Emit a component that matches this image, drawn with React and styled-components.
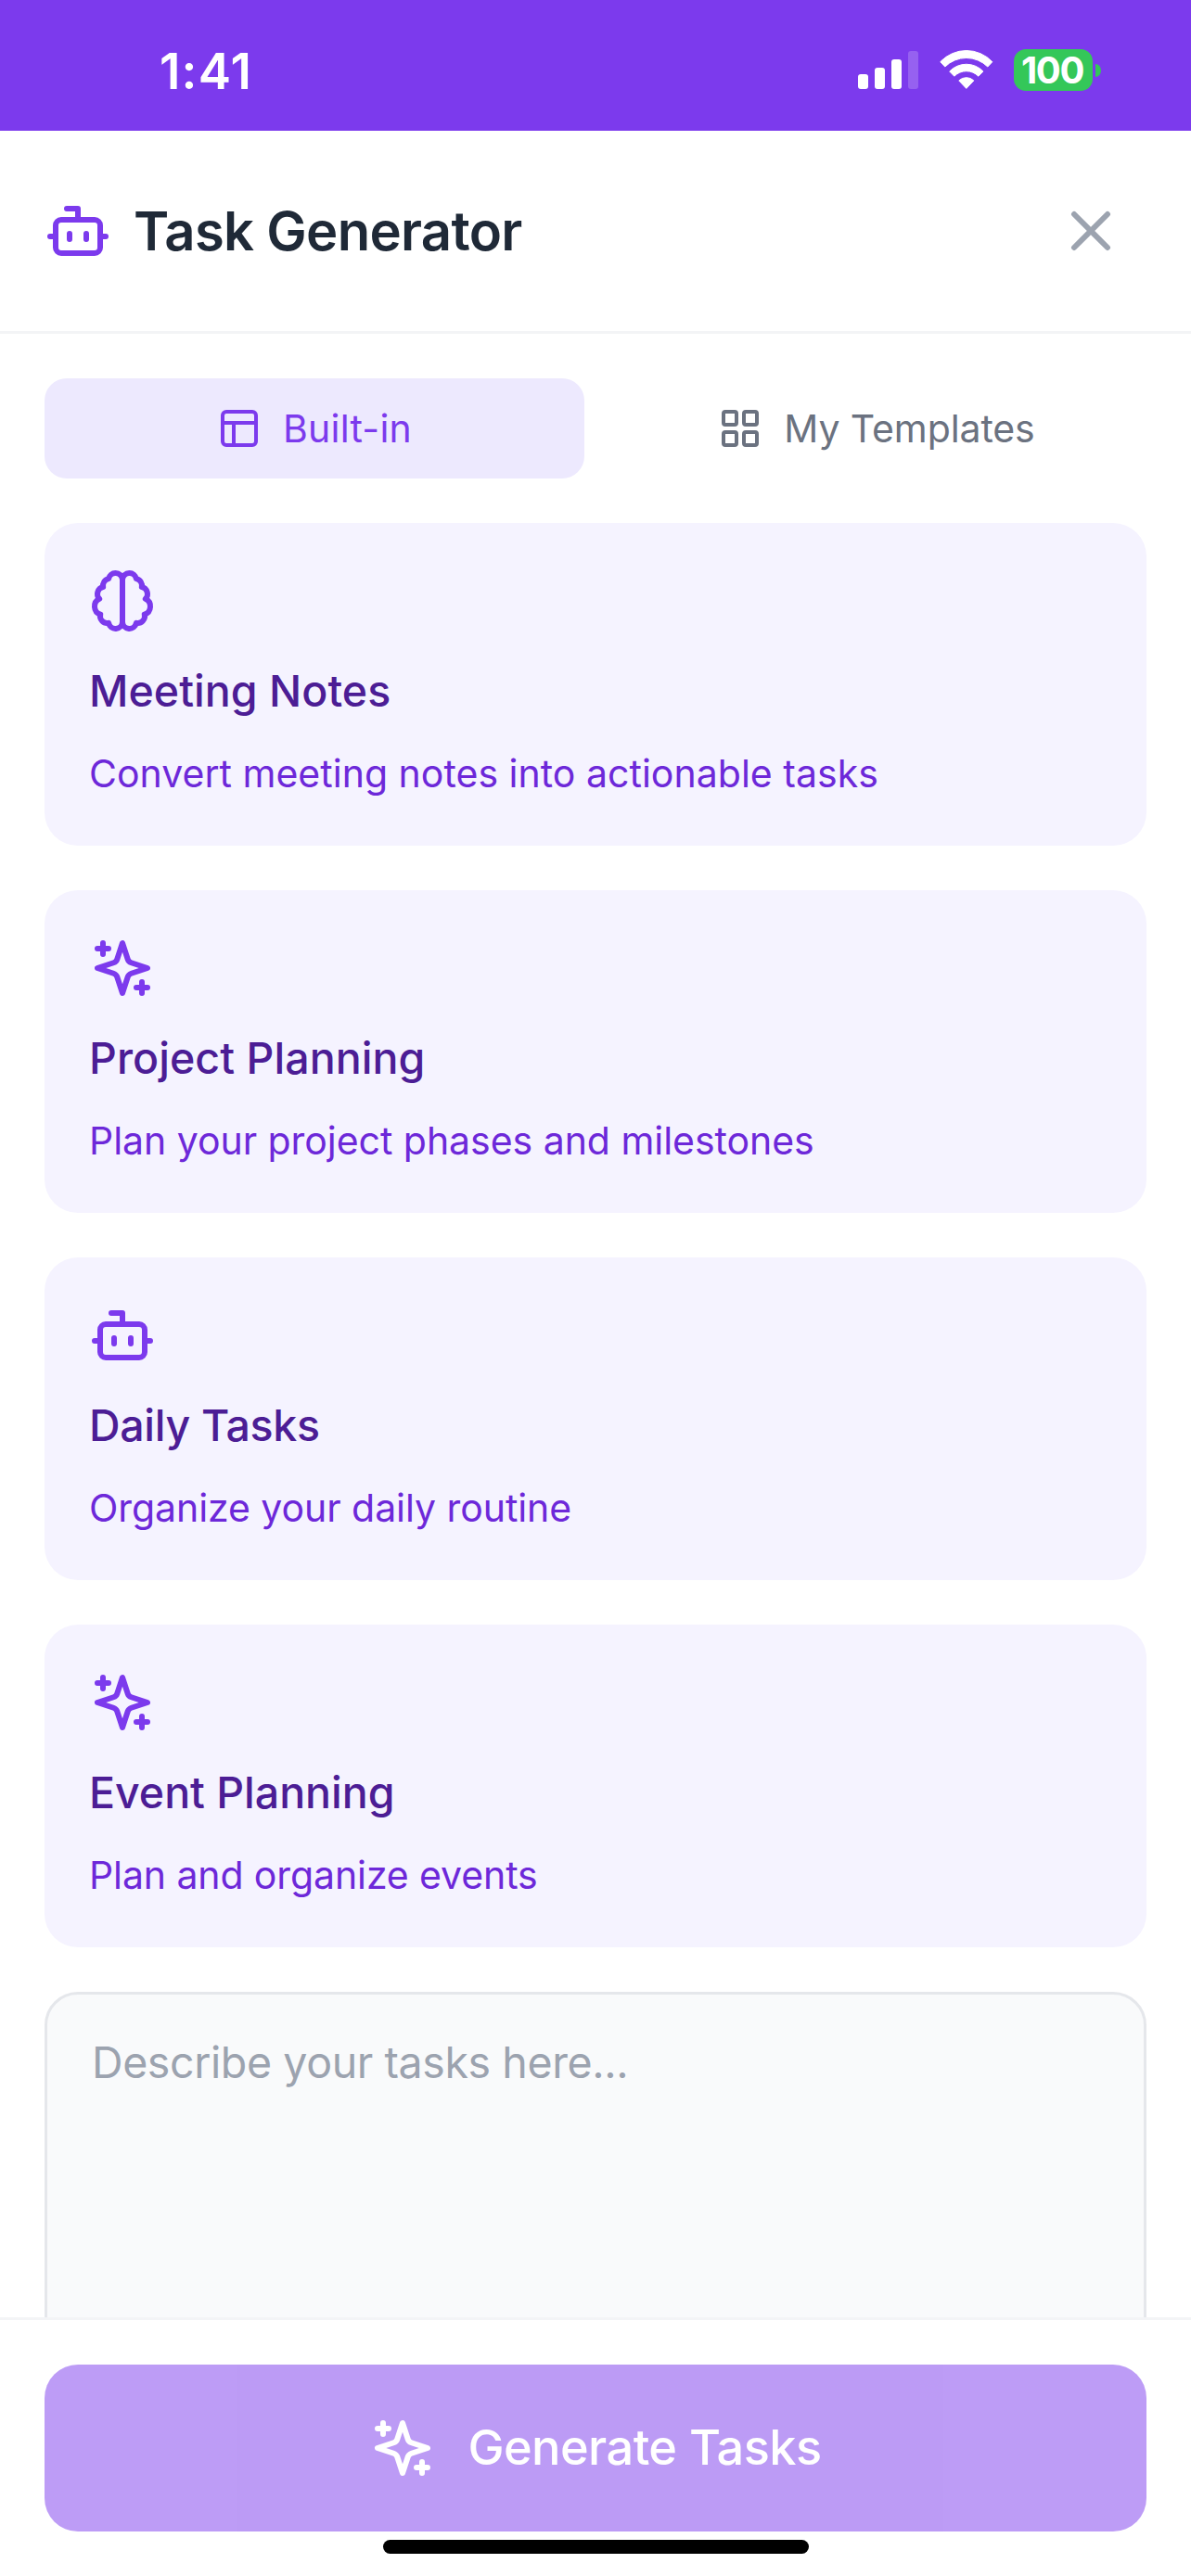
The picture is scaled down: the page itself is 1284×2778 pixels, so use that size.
import React from "react";
import styled, { createGlobalStyle } from "styled-components";

const GlobalStyle = createGlobalStyle`
  * { box-sizing: border-box; }
  body {
    margin: 0;
    background: #ffffff;
    font-family: Inter, "Liberation Sans", sans-serif;
  }
`;

const Screen = styled.div`
  display: flex;
  flex-direction: column;
  width: 1284px;
  height: 2778px;
  overflow: hidden;
  background: #ffffff;
`;

const StatusBar = styled.div`
  flex: none;
  display: flex;
  justify-content: space-between;
  align-items: flex-start;
  height: 141px;
  padding: 53px 97px 0 172px;
  background: #7c3aed;
  color: #ffffff;
`;

const Time = styled.span`
  font-size: 53px;
  font-weight: 600;
  line-height: 49px;
  letter-spacing: 1.2px;
`;

const StatusIcons = styled.div`
  display: flex;
  align-items: flex-start;
`;

const SignalBars = styled.div`
  display: flex;
  align-items: flex-end;
  gap: 7px;
  height: 43px;
  margin-right: 23px;
`;

const SignalBar = styled.span`
  width: 11px;
  height: ${(p) => p.$height}px;
  border-radius: 3px;
  background: #ffffff;
  opacity: ${(p) => (p.$dim ? 0.2 : 1)};
`;

const WifiIcon = styled.svg`
  width: 58px;
  height: 43px;
  margin: 1px 22px 0 0;
`;

const Battery = styled.div`
  display: flex;
  align-items: center;
  gap: 3px;
  height: 45px;
`;

const BatteryBody = styled.div`
  display: flex;
  align-items: center;
  justify-content: center;
  width: 85px;
  height: 45px;
  padding-right: 2px;
  border-radius: 13px;
  background: #34c759;
  font-size: 40px;
  font-weight: 700;
  line-height: 45px;
  letter-spacing: -1.4px;
`;

const BatteryNub = styled.span`
  width: 6px;
  height: 14px;
  border-radius: 0 6px 6px 0 / 0 7px 7px 0;
  background: #34c759;
`;

const Header = styled.header`
  flex: none;
  display: flex;
  align-items: center;
  justify-content: space-between;
  height: 219px;
  padding: 0 48px;
  border-bottom: 3px solid #f3f4f6;
`;

const HeaderTitle = styled.div`
  display: flex;
  align-items: center;
  gap: 24px;
`;

const Title = styled.h1`
  margin: 0;
  color: #1f2937;
  font-size: 58px;
  font-weight: 600;
  line-height: 72px;
  letter-spacing: -0.7px;
`;

const CloseButton = styled.button`
  display: flex;
  padding: 24px;
  border: 0;
  background: none;
`;

const Icon = styled.svg`
  flex: none;
  display: block;
  width: ${(p) => p.$size}px;
  height: ${(p) => p.$size}px;
  fill: none;
  stroke: ${(p) => p.$color};
  stroke-width: 2;
  stroke-linecap: round;
  stroke-linejoin: round;
`;

const Content = styled.main`
  flex: 1;
  min-height: 0;
  display: flex;
  flex-direction: column;
  gap: 48px;
  padding: 48px 48px 0;
  overflow: hidden;
`;

const Tabs = styled.div`
  flex: none;
  display: flex;
  gap: 24px;
`;

const Tab = styled.button`
  flex: 1;
  display: flex;
  align-items: center;
  justify-content: center;
  gap: 23px;
  height: 108px;
  padding: 0;
  border: 0;
  border-radius: 24px;
  background: ${(p) => (p.$active ? "#ede9fe" : "transparent")};
  color: ${(p) => (p.$active ? "#7c3aed" : "#6b7280")};
  font: 400 41px/60px Inter, "Liberation Sans", sans-serif;
  letter-spacing: ${(p) => p.$track};
`;

const Card = styled.article`
  flex: none;
  display: flex;
  flex-direction: column;
  gap: 24px;
  height: 348px;
  padding: 48px;
  border-radius: 36px;
  background: #f5f3ff;
`;

const CardTitle = styled.h2`
  margin: 0;
  color: #4c1d95;
  font-size: 46.5px;
  font-weight: 500;
  line-height: 75px;
  letter-spacing: ${(p) => p.$track};
`;

const CardText = styled.p`
  margin: 0;
  color: #6d28d9;
  font-size: 41px;
  line-height: 55px;
  letter-spacing: ${(p) => p.$track};
`;

const Prompt = styled.textarea`
  flex: none;
  display: block;
  width: 100%;
  height: 450px;
  padding: 37px 48px;
  border: 3px solid #e5e7eb;
  border-radius: 36px;
  outline: 0;
  resize: none;
  background: #f9fafb;
  font: 400 46.5px/72px Inter, "Liberation Sans", sans-serif;
  letter-spacing: -0.4px;

  &::placeholder {
    color: #9ca3af;
    opacity: 1;
  }
`;

const Footer = styled.footer`
  flex: none;
  display: flex;
  flex-direction: column;
  align-items: center;
  height: 279px;
  padding: 48px 48px 0;
  border-top: 3px solid #f3f4f6;
`;

const GenerateButton = styled.button`
  flex: none;
  display: flex;
  align-items: center;
  justify-content: center;
  gap: 34px;
  width: 100%;
  height: 180px;
  padding: 0;
  border: 0;
  border-radius: 36px;
  background: #7c3aed;
  opacity: 0.5;
  color: #ffffff;
  font: 500 52.3px/72px Inter, "Liberation Sans", sans-serif;
  letter-spacing: -0.57px;
`;

const ButtonLabel = styled.span`
  padding-bottom: 2px;
`;

const HomeIndicator = styled.div`
  flex: none;
  width: 459px;
  height: 15px;
  margin-top: 9px;
  border-radius: 8px;
  background: #000000;
`;

const shapes = {
  bot: (
    <>
      <path d="M12 8V4H8" />
      <rect width="16" height="12" x="4" y="8" rx="2" />
      <path d="M2 14h2M20 14h2M15 13v2M9 13v2" />
    </>
  ),
  close: <path d="M18 6 6 18M6 6l12 12" />,
  layout: (
    <>
      <rect width="18" height="18" x="3" y="3" rx="2" />
      <path d="M3 9h18M9 21V9" />
    </>
  ),
  grid: (
    <>
      <rect width="7" height="7" x="3" y="3" rx="1" />
      <rect width="7" height="7" x="14" y="3" rx="1" />
      <rect width="7" height="7" x="14" y="14" rx="1" />
      <rect width="7" height="7" x="3" y="14" rx="1" />
    </>
  ),
  brain: (
    <>
      <path d="M9.5 2A2.5 2.5 0 0 1 12 4.5v15a2.5 2.5 0 0 1-4.96.44 2.5 2.5 0 0 1-2.96-3.08 3 3 0 0 1-.34-5.58 2.5 2.5 0 0 1 1.32-4.24 2.5 2.5 0 0 1 1.98-3A2.5 2.5 0 0 1 9.5 2Z" />
      <path d="M14.5 2A2.5 2.5 0 0 0 12 4.5v15a2.5 2.5 0 0 0 4.96.44 2.5 2.5 0 0 0 2.96-3.08 3 3 0 0 0 .34-5.58 2.5 2.5 0 0 0-1.32-4.24 2.5 2.5 0 0 0-1.98-3A2.5 2.5 0 0 0 14.5 2Z" />
    </>
  ),
  sparkles: (
    <>
      <path d="m12 3-1.912 5.813a2 2 0 0 1-1.275 1.275L3 12l5.813 1.912a2 2 0 0 1 1.275 1.275L12 21l1.912-5.813a2 2 0 0 1 1.275-1.275L21 12l-5.813-1.912a2 2 0 0 1-1.275-1.275L12 3Z" />
      <path d="M5 3v4M19 17v4M3 5h4M17 19h4" />
    </>
  ),
};

function Glyph({ name, size = 72, color = "#7c3aed" }) {
  return (
    <Icon viewBox="0 0 24 24" $size={size} $color={color} aria-hidden="true">
      {shapes[name]}
    </Icon>
  );
}

const templates = [
  {
    icon: "brain",
    title: "Meeting Notes",
    titleTrack: "0.04px",
    text: "Convert meeting notes into actionable tasks",
    textTrack: "0.02px",
  },
  {
    icon: "sparkles",
    title: "Project Planning",
    titleTrack: "0.06px",
    text: "Plan your project phases and milestones",
    textTrack: "-0.04px",
  },
  {
    icon: "bot",
    title: "Daily Tasks",
    titleTrack: "-0.33px",
    text: "Organize your daily routine",
    textTrack: "-0.06px",
  },
  {
    icon: "sparkles",
    title: "Event Planning",
    titleTrack: "-0.02px",
    text: "Plan and organize events",
    textTrack: "-0.1px",
  },
];

export default function App() {
  return (
    <>
      <GlobalStyle />
      <Screen>
        <StatusBar>
          <Time>1:41</Time>
          <StatusIcons>
            <SignalBars>
              <SignalBar $height={16} />
              <SignalBar $height={23} />
              <SignalBar $height={32} />
              <SignalBar $height={41} $dim />
            </SignalBars>
            <WifiIcon viewBox="0 0 58 43" fill="#fff" stroke="#fff" strokeWidth="1" strokeLinejoin="round">
              <path d="M.8 12.7A38.3 38.3 0 0 1 56.8 12.7L51.8 18A32.6 32.6 0 0 0 5.8 18Z M10.7 23A25 25 0 0 1 46.9 23L41.8 28.2A18.2 18.2 0 0 0 15.8 28.2Z M20.8 32.9A11.5 11.5 0 0 1 36.8 32.9L28.8 41.4Z" />
            </WifiIcon>
            <Battery>
              <BatteryBody>100</BatteryBody>
              <BatteryNub />
            </Battery>
          </StatusIcons>
        </StatusBar>

        <Header>
          <HeaderTitle>
            <Glyph name="bot" />
            <Title>Task Generator</Title>
          </HeaderTitle>
          <CloseButton aria-label="Close">
            <Glyph name="close" color="#9ca3af" />
          </CloseButton>
        </Header>

        <Content>
          <Tabs>
            <Tab $active $track="0.25px">
              <Glyph name="layout" size={48} />
              Built-in
            </Tab>
            <Tab $track="-0.1px">
              <Glyph name="grid" size={48} color="#6b7280" />
              My Templates
            </Tab>
          </Tabs>
          {templates.map((t) => (
            <Card key={t.title}>
              <Glyph name={t.icon} />
              <CardTitle $track={t.titleTrack}>{t.title}</CardTitle>
              <CardText $track={t.textTrack}>{t.text}</CardText>
            </Card>
          ))}
          <Prompt placeholder="Describe your tasks here..." />
        </Content>

        <Footer>
          <GenerateButton>
            <Glyph name="sparkles" color="#ffffff" />
            <ButtonLabel>Generate Tasks</ButtonLabel>
          </GenerateButton>
          <HomeIndicator />
        </Footer>
      </Screen>
    </>
  );
}
